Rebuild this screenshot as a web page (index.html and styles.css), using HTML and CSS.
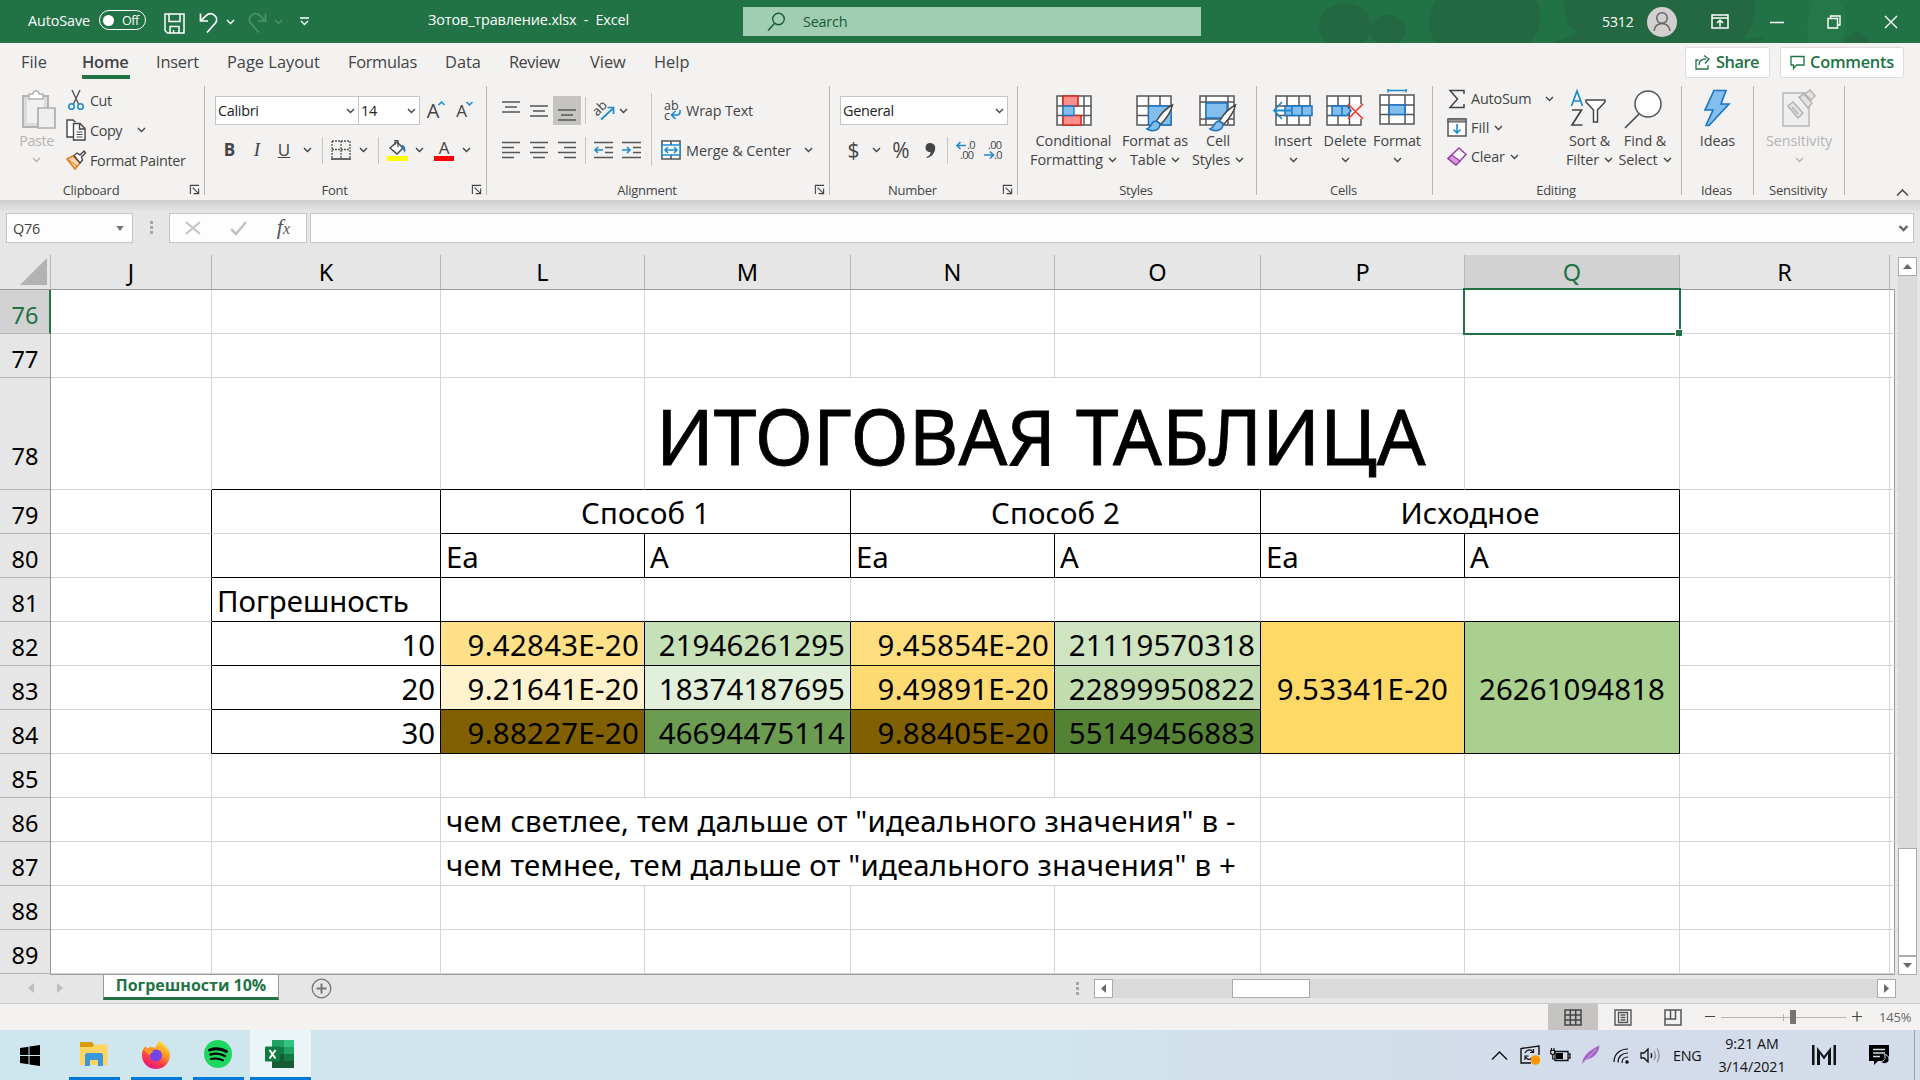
FILE: index.html
```
<!DOCTYPE html>
<html lang="en">
<head>
<meta charset="utf-8">
<title>Зотов_травление.xlsx - Excel</title>
<link rel="stylesheet" href="styles.css">
</head>
<body>
<svg width="0" height="0" class="defs">
  <symbol id="chev" viewBox="0 0 9 6"><path d="M1 1l3.500 3.500L8 1" fill="none" stroke="currentColor" stroke-width="1.400"/></symbol>
  <symbol id="launch" viewBox="0 0 12 12"><path d="M1.500 11V1.500H11M4 4l6 6M10.500 5v5.500H5" fill="none" stroke="#444" stroke-width="1.200"/></symbol>
</svg>
<div class="app">
  <header class="titlebar">
    <svg class="art" width="720" height="43" viewBox="0 0 720 43" fill="#236841"><ellipse cx="145" cy="26" rx="26" ry="23"/><ellipse cx="188" cy="30" rx="18" ry="15"/><path d="M236 0h100q12 20-6 43H236q-14-22 0-43zM364 0h190q6 20-14 43H352l26-10-10-8z"/><path d="M520 43l44-6-6 6zM643 43q14-22 28 0z"/><path d="M612 0q-8 28-2 43h30q12-30-2-43z" fill="#247847"/></svg>
    <span class="autosave">AutoSave</span>
    <span class="toggle"><i></i>Off</span>
    <svg class="save" width="21" height="21" viewBox="0 0 21 21" fill="none" stroke="#fff" stroke-width="1.500"><path d="M1 1h19v19H3.500L1 17.500zM5 1v7.500h11V1M6 20v-6.500h9V20M9.500 20v-3"/></svg>
    <svg class="undo" width="20" height="22" viewBox="0 0 20 22" fill="none" stroke="#fff" stroke-width="1.700"><path d="M1.500 1.500V9H9M1.800 8.800L7 3.700c6-5 13.500 1.500 9.500 7.300L8 20.500"/></svg>
    <svg class="ch w"><use href="#chev"/></svg>
    <svg class="redo" width="20" height="22" viewBox="0 0 20 22" fill="none" stroke="#4d9169" stroke-width="1.700"><path d="M18.500 1.500V9H11M18.200 8.800L13 3.700c-6-5-13.500 1.500-9.500 7.300L12 20.500"/></svg>
    <svg class="ch dim"><use href="#chev"/></svg>
    <svg class="qat" width="9" height="9" viewBox="0 0 9 9" fill="none" stroke="#fff" stroke-width="1.300"><path d="M0 1h9M1 4l3.500 3.500L8 4"/></svg>
    <span class="doc">Зотов_травление.xlsx&nbsp; -&nbsp; Excel</span>
    <div class="search"><svg width="19" height="20" viewBox="0 0 19 20" fill="none" stroke="#185c37" stroke-width="1.400"><circle cx="11.500" cy="7" r="5.800"/><path d="M7.500 11.500L1 18.500"/></svg><span>Search</span></div>
    <span class="user">5312</span>
    <svg class="avatar" width="30" height="30" viewBox="0 0 30 30"><circle cx="15" cy="15" r="15" fill="#d2d0ce"/><g fill="none" stroke="#666" stroke-width="1.500"><circle cx="15" cy="11" r="5.300"/><path d="M7 24c.5-10 15.500-10 16 0"/></g></svg>
    <svg class="winbtn b1" width="18" height="15" viewBox="0 0 18 15" fill="none" stroke="#fff" stroke-width="1.500"><path d="M1 1h16v13H1zM1 4h16M9 12.500V6M6 9l3-3 3 3"/></svg>
    <svg class="winbtn b2" width="14" height="14" viewBox="0 0 14 14" stroke="#fff" stroke-width="1.500"><path d="M0 7.500h14"/></svg>
    <svg class="winbtn b3" width="14" height="14" viewBox="0 0 14 14" fill="none" stroke="#fff" stroke-width="1.400"><path d="M1 3.500h9.500V13H1zM3.500 3.500V1H13v9h-2.500"/></svg>
    <svg class="winbtn b4" width="14" height="14" viewBox="0 0 14 14" stroke="#fff" stroke-width="1.400"><path d="M1 1l12 12M13 1L1 13"/></svg>
  </header>

  <nav class="tabs">
    <span class="t-file">File</span><span class="t-home">Home</span><span class="t-insert">Insert</span><span class="t-page">Page Layout</span><span class="t-form">Formulas</span><span class="t-data">Data</span><span class="t-rev">Review</span><span class="t-view">View</span><span class="t-help">Help</span>
    <div class="pill share"><svg width="16" height="16" viewBox="0 0 16 16" fill="none" stroke="#217346" stroke-width="1.300"><path d="M3.500 6H1v9h12v-4M4 11c0-4 3-6 7-6M9 1.500L14 5l-4 4.500"/></svg>Share</div>
    <div class="pill comments"><svg width="15" height="15" viewBox="0 0 15 15" fill="none" stroke="#217346" stroke-width="1.300"><path d="M1 1.500h13v8.500H6.500L3.500 13.500V10H1z"/></svg>Comments</div>
  </nav>

  <section class="ribbon">
    <div class="group g-clip">
      <div class="body">
        <div class="big paste"><svg width="36" height="40" viewBox="0 0 36 40"><path d="M2 6h25v31H2z" fill="#dcdcdc" stroke="#b5b3b1" stroke-width="2"/><path d="M6 9h17v24H6z" fill="#f1f0ef"/><path d="M8 4h4c0-4 6-4 6 0h4v5H8z" fill="#fff" stroke="#b5b3b1" stroke-width="1.500"/><path d="M17 18h17v20H17z" fill="#eee" stroke="#b0aeac" stroke-width="1.700"/></svg><span>Paste</span><svg class="ch"><use href="#chev"/></svg></div>
        <div class="stack clipstack">
          <div><svg width="20" height="22" viewBox="0 0 20 22" fill="none"><path d="M6 1l7 15M14 1L7 16" stroke="#555" stroke-width="1.400"/><g stroke="#1e8bcd" stroke-width="1.600"><circle cx="5.500" cy="17.500" r="2.700"/><circle cx="14.500" cy="17.500" r="2.700"/></g></svg><span class="s-cut">Cut</span></div>
          <div><svg width="20" height="22" viewBox="0 0 20 22" fill="#fff" stroke="#444" stroke-width="1.400"><path d="M7 18H1V1h6l2.500 2M7.500 4.500h6.500l5 5V21H7.500zM13.500 4.500V10H19"/><path d="M10.500 13h6M10.500 15.500h6M10.500 18h6" stroke-width="1"/></svg><span class="s-copy">Copy</span><svg class="ch"><use href="#chev"/></svg></div>
          <div><svg width="20" height="20" viewBox="0 0 20 20"><path d="M1 9l6-3 7 7-5 6z" fill="#fbd9b8" stroke="#e07b1a" stroke-width="1.500"/><path d="M3 10l8 6" stroke="#e07b1a"/><path d="M8 5.500l3-2.500 3 2 4-4 1.500 2-4 4 1 3-2.500 3z" fill="#fff" stroke="#444" stroke-width="1.400"/></svg><span class="s-fp">Format Painter</span></div>
        </div>
      </div>
      <div class="label">Clipboard<svg class="la"><use href="#launch"/></svg></div>
    </div>

    <div class="group g-font">
      <div class="body rows">
        <div class="row f1">
          <div class="combo">Calibri<svg class="ch"><use href="#chev"/></svg></div>
          <div class="combo">14<svg class="ch"><use href="#chev"/></svg></div>
          <span class="grow">A<svg width="7" height="5" viewBox="0 0 7 5"><path d="M.5 4L3.500 1l3 3" fill="none" stroke="#1e8bcd" stroke-width="1.500"/></svg></span>
          <span class="shrink">A<svg width="7" height="5" viewBox="0 0 7 5"><path d="M.5 1l3 3 3-3" fill="none" stroke="#1e8bcd" stroke-width="1.500"/></svg></span>
        </div>
        <div class="row f2">
          <b>B</b><i>I</i><u>U</u><svg class="ch"><use href="#chev"/></svg><span class="vs"></span>
          <svg width="20" height="20" viewBox="0 0 20 20" fill="none" stroke="#555" stroke-width="1.300"><path d="M1 1h18v17M1 1v17M10 1v17M1 9.500h18" stroke-dasharray="2 1"/><path d="M0 19h20" stroke-width="1.800"/></svg>
          <svg class="ch"><use href="#chev"/></svg><span class="vs"></span>
          <svg width="21" height="22" viewBox="0 0 21 22"><path d="M3 9l7-6 6 6-6 6z" fill="#fff" stroke="#444" stroke-width="1.400"/><path d="M8 6V1.500h3V8" fill="none" stroke="#444" stroke-width="1.200"/><path d="M15 6c3 0 4 4 3 8-1-2-2-4-4-5z" fill="#2e75b6"/><path d="M0 17h21v5H0z" fill="#ff0"/></svg>
          <svg class="ch"><use href="#chev"/></svg>
          <span class="fcolor">A</span>
          <svg class="ch"><use href="#chev"/></svg>
        </div>
      </div>
      <div class="label">Font<svg class="la"><use href="#launch"/></svg></div>
    </div>

    <div class="group g-align">
      <div class="body">
        <div class="rows ar">
        <div class="row a1">
          <svg width="18" height="14" class="up"><path d="M0 2h18M3 7h12M0 12h18" class="ln"/></svg>
          <svg width="18" height="14"><path d="M0 2h18M3 7h12M0 12h18" class="ln"/></svg>
          <span class="on"><svg width="18" height="14"><path d="M0 2h18M3 7h12M0 12h18" class="ln"/></svg></span>
          <span class="vs"></span>
          <svg width="21" height="20" viewBox="0 0 21 20"><text x="0" y="12" transform="rotate(-45 6 10)" class="abt">ab</text><path d="M7 18.500L19.500 7M13.500 6.500h6V13" fill="none" stroke="#1e8bcd" stroke-width="1.700"/></svg>
          <svg class="ch"><use href="#chev"/></svg>
        </div>
        <div class="row a2">
          <svg width="18" height="18"><path d="M0 1.500h18M0 6.500h12M0 11.500h18M0 16.500h12" class="ln"/></svg>
          <svg width="18" height="18"><path d="M0 1.500h18M3 6.500h12M0 11.500h18M3 16.500h12" class="ln"/></svg>
          <svg width="18" height="18"><path d="M0 1.500h18M6 6.500h12M0 11.500h18M6 16.500h12" class="ln"/></svg>
          <span class="vs"></span>
          <svg width="19" height="18"><path d="M0 1.500h19M11 6.500h8M11 11.500h8M0 16.500h19" class="ln"/><path d="M1 9h8M4 6L1 9l3 3" class="bl"/></svg>
          <svg width="19" height="18"><path d="M0 1.500h19M11 6.500h8M11 11.500h8M0 16.500h19" class="ln"/><path d="M0 9h8M5 6l3 3-3 3" class="bl"/></svg>
        </div>
        </div>
        <span class="vs tall"></span>
        <div class="rows wr">
          <div class="row"><svg width="20" height="21" viewBox="0 0 20 21"><text x="3" y="10" class="abc">ab</text><text x="3" y="20" class="abc">c</text><path d="M19 10v2q0 3-3 3h-5M14.500 11l-4 4 4 4" class="bl"/></svg><span class="s-wrap">Wrap Text</span></div>
          <div class="row"><svg width="20" height="20" viewBox="0 0 20 20"><path d="M1 1h18v18H1zM10 1v18" fill="#fff" stroke="#555" stroke-width="1.600"/><path d="M1 5h18v10H1z" fill="#fff" stroke="#1e8bcd" stroke-width="1.500"/><path d="M4 10h12M7 7l-3 3 3 3M13 7l3 3-3 3" class="bl"/></svg><span class="s-merge">Merge &amp; Center</span><svg class="ch"><use href="#chev"/></svg></div>
        </div>
      </div>
      <div class="label">Alignment<svg class="la"><use href="#launch"/></svg></div>
    </div>

    <div class="group g-num">
      <div class="body rows">
        <div class="row n1"><div class="combo">General<svg class="ch"><use href="#chev"/></svg></div></div>
        <div class="row n2">
          <span class="sym">$</span><svg class="ch"><use href="#chev"/></svg><span class="sym">%</span>
          <svg width="11" height="17" viewBox="0 0 11 17"><path d="M5 1c4 0 6 3 5 7-1 4-4 7-8 8l-.5-1c3-1 4-3 4-5C2 10 .5 8 .5 5.500S2.500 1 5 1z" fill="#444"/></svg>
          <span class="vs"></span>
          <svg width="20" height="20" viewBox="0 0 20 20"><text x="11" y="9" class="dec">.0</text><text x="4" y="19" class="dec">.00</text><path d="M1 5.500h9M4.500 2L1 5.500 4.500 9" class="bl"/></svg>
          <svg width="20" height="20" viewBox="0 0 20 20"><text x="4" y="9" class="dec">.00</text><text x="10" y="19" class="dec">.0</text><path d="M0 15h9M6 11.500l3.500 3.500L6 18.500" class="bl"/></svg>
        </div>
      </div>
      <div class="label">Number<svg class="la"><use href="#launch"/></svg></div>
    </div>

    <div class="group g-styles">
      <div class="body">
        <div class="big"><svg width="36" height="36" viewBox="0 0 36 36"><path d="M1 4h34v29H1zM1 14h34M1 23.500h34M7 4v29M28 4v29" fill="#fff" stroke="#555" stroke-width="1.500"/><path d="M7 4h15v10H7zM7 23.500h18V33H7z" fill="#ff8f8f" stroke="#d9291c" stroke-width="1.600"/><path d="M7 14h11v9.500H7z" fill="#83beec" stroke="#1874c5" stroke-width="1.300"/></svg><span>Conditional</span><span>Formatting <svg class="ch"><use href="#chev"/></svg></span></div>
        <div class="big"><svg width="38" height="36" viewBox="0 0 38 36"><path d="M1 4h34v29H1zM1 14h34M1 23.500h34M12.500 4v29M24 4v29" fill="#fff" stroke="#555" stroke-width="1.500"/><path d="M12.500 14H35v19H12.500z" fill="#83beec" stroke="#1874c5" stroke-width="1.300"/><path d="M36.500 13c-8 4-12.500 10-16 16l4.500 3c5-5 9.500-11 11.500-19z" fill="#fff" stroke="#444" stroke-width="1.400"/><path d="M20 29c-5 0-4 6-9 8 5 3 13 2 13-5z" fill="#83beec" stroke="#1874c5" stroke-width="1.500"/></svg><span>Format as</span><span>Table <svg class="ch"><use href="#chev"/></svg></span></div>
        <div class="big"><svg width="38" height="36" viewBox="0 0 38 36"><path d="M1 4h34v29H1zM1 10h34M1 27h34M7 4v29M29 4v29" fill="#fff" stroke="#555" stroke-width="1.500"/><path d="M7 11h21v15H7z" fill="#83beec" stroke="#1874c5" stroke-width="1.300"/><path d="M36.500 13c-8 4-12.500 10-16 16l4.500 3c5-5 9.500-11 11.500-19z" fill="#fff" stroke="#444" stroke-width="1.400"/><path d="M20 29c-5 0-4 6-9 8 5 3 13 2 13-5z" fill="#83beec" stroke="#1874c5" stroke-width="1.500"/></svg><span>Cell</span><span>Styles <svg class="ch"><use href="#chev"/></svg></span></div>
      </div>
      <div class="label">Styles</div>
    </div>

    <div class="group g-cells">
      <div class="body">
        <div class="big"><svg width="40" height="36" viewBox="0 0 40 36"><path d="M3 4h34v29H3zM3 14h34M3 23.500h34M14 4v29M26 4v29" fill="#fff" stroke="#555" stroke-width="1.500"/><path d="M12 14h27v9.500H12zM19 14v9.500M29 14v9.500" fill="#83beec" stroke="#1874c5" stroke-width="1.500"/><path d="M1.500 18.500H18M9 10l-8 8.500L9 27" fill="none" stroke="#1e8bcd" stroke-width="1.800"/></svg><span>Insert</span><svg class="ch"><use href="#chev"/></svg></div>
        <div class="big"><svg width="38" height="36" viewBox="0 0 38 36"><path d="M1 4h34v29H1zM1 14h34M1 23.500h34M12 4v29M23.500 4v29" fill="#fff" stroke="#555" stroke-width="1.500"/><path d="M24 12h14v15H24z" fill="#f3f2f1"/><path d="M6 14h15l4 4.800-4 4.700H6zM16 14v9.500" fill="#83beec" stroke="#1874c5" stroke-width="1.500"/><path d="M22 12l15 15M37 12L22 27" stroke="#e8413a" stroke-width="1.700"/></svg><span>Delete</span><svg class="ch"><use href="#chev"/></svg></div>
        <div class="big fmt"><svg width="36" height="38" viewBox="0 0 36 38"><path d="M1 6h34v29H1zM1 16h34M1 25.500h34M10 6v29M26 6v29" fill="#fff" stroke="#555" stroke-width="1.500"/><path d="M10 16h16v9.500H10z" fill="#83beec" stroke="#1874c5" stroke-width="1.600"/><path d="M9 1.500h18M9 0v3.500M27 0v3.500" stroke="#1e8bcd" stroke-width="1.500"/></svg><span>Format</span><svg class="ch"><use href="#chev"/></svg></div>
      </div>
      <div class="label">Cells</div>
    </div>

    <div class="group g-edit">
      <div class="body">
        <div class="stack editstack">
          <div><svg width="20" height="20" viewBox="0 0 20 20" fill="none" stroke="#444" stroke-width="1.500"><path d="M17 5V1.500H3L10.500 10 3 18.500h14V15"/></svg><span class="s-as">AutoSum</span><svg class="ch far"><use href="#chev"/></svg></div>
          <div><svg width="20" height="19" viewBox="0 0 20 19"><path d="M1 1h18v17H1z" fill="#fff" stroke="#555" stroke-width="1.500"/><path d="M1 1h18v3H1z" fill="#999" stroke="#555"/><path d="M10 6v9M6.500 11.500L10 15l3.500-3.500" class="bl"/></svg><span class="s-fill">Fill</span><svg class="ch"><use href="#chev"/></svg></div>
          <div><svg width="20" height="19" viewBox="0 0 20 19"><path d="M1 11.500L12 1l7 6.500L9 18z" fill="#fff" stroke="#9b3ba5" stroke-width="1.500"/><path d="M1 11.500L5 8l8 6-4 4z" fill="#d59ad9" stroke="#9b3ba5" stroke-width="1.300"/></svg><span class="s-clear">Clear</span><svg class="ch"><use href="#chev"/></svg></div>
        </div>
        <div class="big sort"><svg width="38" height="38" viewBox="0 0 38 38"><g fill="none" stroke-width="1.700"><path d="M1.500 17L7 2l5.500 15M3.500 12h7" stroke="#1e8bcd"/><path d="M2 21h9.500L2 36h10.500" stroke="#444"/><path d="M16 11h19v2l-7.500 8v12h-4V21L16 13z" stroke="#444" fill="#fff" stroke-width="1.500"/></g></svg><span>Sort &amp;</span><span>Filter <svg class="ch"><use href="#chev"/></svg></span></div>
        <div class="big find"><svg width="38" height="40" viewBox="0 0 38 40"><circle cx="24" cy="15" r="13" fill="#fff" stroke="#555" stroke-width="1.500"/><path d="M15 25L1 39" stroke="#444" stroke-width="1.600"/></svg><span>Find &amp;</span><span>Select <svg class="ch"><use href="#chev"/></svg></span></div>
      </div>
      <div class="label">Editing</div>
    </div>

    <div class="group g-ideas">
      <div class="body"><div class="big bolt"><svg width="28" height="38" viewBox="0 0 28 38"><path d="M11 1.500h12L18 15h8L6 36.500h-3L10 21H2z" fill="#83beec" stroke="#1874c5" stroke-width="1.600"/></svg><span>Ideas</span></div></div>
      <div class="label">Ideas</div>
    </div>
    <div class="group g-sens">
      <div class="body"><div class="big paste sens"><svg width="36" height="38" viewBox="0 0 36 38"><path d="M2 4h26v33H2z" fill="#eee" stroke="#c4c2c0" stroke-width="1.800"/><g fill="#e4e3e2" stroke="#b5b3b1" stroke-width="1.500"><path d="M7 17l5-4 10 11-5 5z"/><path d="M11 18l6 7"/><path d="M18 8l5-3 8 9-4 5z"/><path d="M24 5l5-4 5 6-4 4z"/></g></svg><span>Sensitivity</span><svg class="ch"><use href="#chev"/></svg></div></div>
      <div class="label">Sensitivity</div>
    </div>
    <div class="collapse"><svg width="13" height="9" viewBox="0 0 13 9"><path d="M1 7.500L6.500 2 12 7.500" fill="none" stroke="#444" stroke-width="1.500"/></svg></div>
  </section>

  <section class="formula">
    <div class="box name">Q76<svg width="8" height="5"><path d="M0 0h8L4 5z" fill="#777"/></svg></div>
    <svg class="dots" width="4" height="14"><path d="M0 0h3v3H0zM0 5h3v3H0zM0 10h3v3H0z" fill="#a6a6a6"/></svg>
    <div class="box fx"><svg width="16" height="14" viewBox="0 0 16 14"><path d="M1 1l14 12M15 1L1 13" stroke="#c4c4c4" stroke-width="2"/></svg><svg width="17" height="15" viewBox="0 0 17 15"><path d="M1 8l5 5L16 1" fill="none" stroke="#c4c4c4" stroke-width="2.600"/></svg><em>f<small>x</small></em></div>
    <div class="box input"><svg width="9" height="7"><path d="M.5 1l4 4 4-4" fill="none" stroke="#666" stroke-width="2.400"/></svg></div>
  </section>

  <section class="sheet">
    <div class="cols">
      <span class="corner"><svg width="27" height="27"><path d="M27 0v27H0z" fill="#b2b2b2"/></svg></span>
      <span>J</span><span>K</span><span>L</span><span>M</span><span>N</span><span>O</span><span>P</span><span class="sel">Q</span><span>R</span><span class="end"></span>
    </div>
    <div class="mid">
      <div class="rowheads"><span class="sel">76</span><span>77</span><span class="h78">78</span><span>79</span><span>80</span><span>81</span><span>82</span><span>83</span><span>84</span><span>85</span><span>86</span><span>87</span><span>88</span><span>89</span></div>
      <div class="grid">
        <p></p><p></p><p></p><p></p><p></p><p></p><p></p><p class="active"><span class="cursor"></span></p><p></p><p class="z"></p>
        <p></p><p></p><p></p><p></p><p></p><p></p><p></p><p></p><p></p><p class="z"></p>
        <p></p><p class="kb"></p><p class="kb"></p><p class="kb title">ИТОГОВАЯ ТАБЛИЦА</p><p class="kb"></p><p></p><p class="z"></p>
        <p class="kr"></p><p class="kr"></p><p class="kr kb span2">Способ 1</p><p class="kr kb span2">Способ 2</p><p class="kr kb span2">Исходное</p><p></p><p class="z"></p>
        <p class="kr"></p><p class="kr kb"></p><p class="kr kb">Ea</p><p class="kr kb">A</p><p class="kr kb">Ea</p><p class="kr kb">A</p><p class="kr kb">Ea</p><p class="kr kb">A</p><p></p><p class="z"></p>
        <p class="kr"></p><p class="kr kb">Погрешность</p><p class="kb"></p><p class="kb"></p><p class="kb"></p><p class="kb"></p><p class="kb"></p><p class="kr kb"></p><p></p><p class="z"></p>
        <p class="kr"></p><p class="kr kb n">10</p><p class="kr kb n y1">9.42843E-20</p><p class="kr kb n v1">21946261295</p><p class="kr kb n y3">9.45854E-20</p><p class="kr kb n v4">21119570318</p><p class="kr kb span3 y5">9.53341E-20</p><p class="kr kb span3 v7">26261094818</p><p></p><p class="z"></p>
        <p class="kr"></p><p class="kr kb n">20</p><p class="kr kb n y2">9.21641E-20</p><p class="kr kb n v2">18374187695</p><p class="kr kb n y4">9.49891E-20</p><p class="kr kb n v5">22899950822</p><p></p><p class="z"></p>
        <p class="kr"></p><p class="kr kb n">30</p><p class="kr kb n dk">9.88227E-20</p><p class="kr kb n v3">46694475114</p><p class="kr kb n dk">9.88405E-20</p><p class="kr kb n v6">55149456883</p><p></p><p class="z"></p>
        <p></p><p></p><p></p><p></p><p></p><p></p><p></p><p></p><p></p><p class="z"></p>
        <p></p><p></p><p class="note">чем светлее, тем дальше от "идеального значения" в -</p><p></p><p></p><p></p><p class="z"></p>
        <p></p><p></p><p class="note">чем темнее, тем дальше от "идеального значения" в +</p><p></p><p></p><p></p><p class="z"></p>
        <p></p><p></p><p></p><p></p><p></p><p></p><p></p><p></p><p></p><p class="z"></p>
        <p></p><p></p><p></p><p></p><p></p><p></p><p></p><p></p><p></p><p class="z"></p>
      </div>
    </div>
    <div class="vscroll"><span class="sb"><svg width="9" height="5"><path d="M0 5h9L4.500 0z" fill="#6a6a6a"/></svg></span><span class="vthumb"></span><span class="sb"><svg width="9" height="5"><path d="M0 0h9L4.500 5z" fill="#6a6a6a"/></svg></span></div>
  </section>

  <section class="sheettabs">
    <svg class="nav1" width="6" height="10"><path d="M6 0v10L0 5z" fill="#bdbdbd"/></svg><svg class="nav2" width="6" height="10"><path d="M0 0v10l6-5z" fill="#bdbdbd"/></svg>
    <div class="tab">Погрешности 10%</div>
    <svg class="plus" width="21" height="21" viewBox="0 0 21 21" fill="none" stroke="#777"><circle cx="10.500" cy="10.500" r="9.300" stroke-width="1.300"/><path d="M5.500 10.500h10M10.500 5.500v10" stroke-width="2"/></svg>
    <svg class="hd" width="4" height="14"><path d="M0 0h3v3H0zM0 5h3v3H0zM0 10h3v3H0z" fill="#a6a6a6"/></svg>
    <div class="hscroll"><span class="sb"><svg width="5" height="9"><path d="M5 0v9L0 4.500z" fill="#6a6a6a"/></svg></span><span class="hthumb"></span><span class="sb"><svg width="5" height="9"><path d="M0 0v9l5-4.500z" fill="#6a6a6a"/></svg></span></div>
  </section>

  <section class="status">
    <span class="view on"><svg width="18" height="17" viewBox="0 0 18 17" fill="none" stroke="#444" stroke-width="1.500"><path d="M1 1h16v15H1zM1 6h16M1 11h16M6.300 1v15M11.700 1v15"/></svg></span>
    <span class="view"><svg width="18" height="17" viewBox="0 0 18 17" fill="none" stroke="#555" stroke-width="1.400"><path d="M1 1h16v15H1zM4.500 3.500h9v10h-9zM6.500 6h5M6.500 8.500h5M6.500 11h5"/></svg></span>
    <span class="view"><svg width="18" height="17" viewBox="0 0 18 17" fill="none" stroke="#555" stroke-width="1.500"><path d="M1 1h16v15H1zM1 10h10.500V1M6.500 1v9"/></svg></span>
    <svg class="zoom" width="160" height="16" viewBox="0 0 160 16"><path d="M0 7.500h10M147 7.500h10M152 2.500v10" stroke="#444" stroke-width="1.200"/><path d="M16 8.500h125M78.500 5v7" stroke="#b5b3b1"/><path d="M85 1h6v14h-6z" fill="#777573"/></svg>
    <span class="pct">145%</span>
  </section>

  <footer class="taskbar">
    <span class="tk start"><svg width="20" height="21" viewBox="0 0 20 21"><path d="M0 3l8.500-1.200V10H0zM9.500 1.600L20 0v10H9.500zM0 11h8.500v8.200L0 18zM9.500 11H20v10L9.500 19.400z"/></svg></span>
    <span class="tk run fold"><svg width="28" height="24" viewBox="0 0 28 24"><path d="M0 1q0-1 1-1h11l2 3-2 3H0z" fill="#d99a07"/><path d="M0 5h12l3-2.500h12.500V23H0z" fill="#ffd463"/><path d="M5 24V13q0-2 2-2h14q2 0 2 2v11h-5v-6h-8v6z" fill="#3b97dd"/></svg></span>
    <span class="tk run fire"><svg width="28" height="29" viewBox="0 0 28 29"><defs><linearGradient id="ff" x1=".8" y1="0" x2=".3" y2="1"><stop offset="0" stop-color="#fff04a"/><stop offset=".4" stop-color="#ff9a1f"/><stop offset=".7" stop-color="#ff3b47"/><stop offset="1" stop-color="#e31587"/></linearGradient></defs><path d="M18 0c1 4 9 6 10 14 0 9-6 15-14 15S0 23 0 15c0-5 2-7 4-9l1 3c3-3 6-2 8-1 1-3 3-5 5-8z" fill="url(#ff)"/><circle cx="14" cy="15.500" r="6" fill="#7542e5"/><path d="M2 9c4 0 7 1 10 3-3 0-4 2-4 3-3-1-5-3-6-6z" fill="#ff9a1f"/></svg></span>
    <span class="tk run spot"><svg width="28" height="28" viewBox="0 0 28 28"><circle cx="14" cy="14" r="14" fill="#1ed760"/><g fill="none" stroke="#000" stroke-linecap="round"><path d="M5.500 10c6-2 12-1.500 17 1.500" stroke-width="2.800"/><path d="M6.500 14.500c5-1.500 10-1 14.500 1.500" stroke-width="2.400"/><path d="M7 19c4-1 8-.8 12 1.300" stroke-width="2"/></g></svg></span>
    <span class="tk run xl"><svg width="30" height="28" viewBox="0 0 30 28"><path d="M7 0h12v7H7z" fill="#21a366"/><path d="M19 0h10v7H19z" fill="#33c481"/><path d="M7 7h12v7H7z" fill="#107c41"/><path d="M19 7h10v7H19z" fill="#21a366"/><path d="M7 14h12v7H7z" fill="#185c37"/><path d="M19 14h10v7H19z" fill="#107c41"/><path d="M7 21h22v7H7z" fill="#185c37"/><rect x="0" y="6.500" width="15" height="15" rx="1" fill="#107c41"/><path d="M4.500 10l6 8.500M10.500 10l-6 8.500" stroke="#fff" stroke-width="2"/></svg></span>
    <svg class="t-up" width="17" height="11" viewBox="0 0 17 11"><path d="M1 9.500L8.500 2 16 9.500" fill="none" stroke="#111" stroke-width="1.400"/></svg>
    <svg class="t-sync" width="21" height="20" viewBox="0 0 21 20"><path d="M11 18H1V3.500L19 1v9" fill="none" stroke="#111" stroke-width="1.400"/><path d="M5 8c2-4 6-4 8-1M13.500 4v3.500H10M5 15v-4h3.500M6 12c1 3 4 3 6 1" fill="none" stroke="#111" stroke-width="1.200"/><circle cx="15.500" cy="15" r="4.800" fill="#ff9500"/></svg>
    <svg class="t-bat" width="21" height="15" viewBox="0 0 21 15"><path d="M5 3.500h13v9H5zM18.500 6h1.500v4h-1.500" fill="none" stroke="#111" stroke-width="1.300"/><path d="M6 5h7v6H6z"/><path d="M.7 2.500h4v3q-2 2-4 0zM1.500 0v2.500M4 0v2.500M2.700 7v4H5" fill="none" stroke="#111" stroke-width="1.200"/></svg>
    <svg class="t-fea" width="19" height="20" viewBox="0 0 19 20"><path d="M1 19C2 11 8 5 18.500.5 18 8 12 14 4 15z" fill="#a464c4"/><path d="M1 19.500L15 4" stroke="#d8b4e6"/></svg>
    <svg class="t-wifi" width="17" height="17" viewBox="0 0 17 17" fill="none" stroke="#111" stroke-width="1.200"><path d="M1 15C1 7 7 2 15 2M5 15.500c0-6 4-9.500 10-9.500M9 16c0-4 2-6 6-6"/><circle cx="14" cy="15" r="1.200" fill="#111"/></svg>
    <svg class="t-vol" width="21" height="17" viewBox="0 0 21 17" fill="none" stroke="#111" stroke-width="1.300"><path d="M1 6h3l4-4v13l-4-4H1zM11 6q1.500 2.500 0 5"/><path d="M14 4q3 4.500 0 9M17 1.500q4.500 7 0 14" stroke="#8c939c"/></svg>
    <span class="eng">ENG</span>
    <div class="clock"><span>9:21 AM</span><span>3/14/2021</span></div>
    <svg class="t-m" width="24" height="20" viewBox="0 0 24 20"><path d="M0 0h2.500v20H0zM21.500 0H24v20h-2.500zM5 20V2l7 9 7-9v18h-3V9l-4 5.500L8 9v11z" fill="#111"/></svg>
    <svg class="t-note" width="21" height="20" viewBox="0 0 21 20"><path d="M0 0h20v16H9l-4 4v-4H0z"/><path d="M4 4.500h12M4 8h12M4 11.500h7" stroke="#d4dcea" stroke-width="1.400"/><path d="M15.500 9.500c1.500 4 0 7-4 7 3 4 9 2 8.500-3-.5-2.500-2.500-4-4.500-4z" stroke="#d4dcea"/></svg>
    <span class="edge"></span>
  </footer>
</div>
</body>
</html>
```
FILE: styles.css
```
*{box-sizing:border-box}
body{margin:0;width:1920px;height:1080px;overflow:hidden;background:#e6e6e6;font-family:"Open Sans","Noto Sans",sans-serif;font-size:14.4px;color:#444}
svg{flex:none;display:block;overflow:visible}
.defs{position:absolute}
.app{display:flex;flex-direction:column;width:1920px;height:1080px}
.ch{width:9px;height:6px;color:#444}
.ln{stroke:#555;stroke-width:1.5;fill:none}
.bl{stroke:#1e8bcd;stroke-width:1.6;fill:none}

/* title bar */
.titlebar{position:relative;height:43px;flex:none;background:#217346;color:#fff;display:flex;align-items:center;white-space:nowrap}
.titlebar>*{flex:none}
.art{position:absolute;left:1200px;top:0;overflow:hidden}
.titlebar>:not(.art){position:relative}
.autosave{margin-left:28px;width:71px;letter-spacing:-.1px;margin-top:-2px}
.toggle{width:47px;height:20px;border:1.5px solid #fff;border-radius:10px;display:flex;align-items:center;gap:8px;padding-left:3px;font-size:12.5px;letter-spacing:-.5px;margin-top:-3px}
.toggle i{width:11px;height:11px;border-radius:50%;background:#fff}
.save{margin-left:18px;margin-top:3px}
.undo{margin:3px 7px 0 14px}
.ch.w{color:#fff}
.ch.dim{color:#4d9169}
.redo{margin:3px 7px 0 12px}
.qat{margin-left:17px}
.doc{margin-left:119px;width:315px;letter-spacing:-.12px;margin-top:-4px}
.search{width:458px;height:29px;background:#a0cdb4;color:#185c37;display:flex;align-items:center;padding-left:24px;letter-spacing:-.2px}
.search span{margin-left:17px}
.user{margin-left:401px;width:45px;font-size:14px;letter-spacing:-.1px}
.b1{margin-left:34px}
.b2{margin-left:41px}
.b3{margin-left:43px}
.b4{margin-left:43px}

/* ribbon tabs */
.tabs{height:43px;flex:none;background:#f3f2f1;display:flex;font-size:16.4px;padding-left:21px;line-height:38px}
.tabs>span{flex:none;height:36px}
.t-file{width:61px}
.t-home{width:74px;font-weight:600;letter-spacing:-.2px;background:linear-gradient(#217346,#217346) 0 32px/48px 4px no-repeat}
.t-insert{width:71px;letter-spacing:-.2px}
.t-page{width:121px}
.t-form{width:97px;letter-spacing:-.3px}
.t-data{width:64px}
.t-rev{width:81px;letter-spacing:-.5px}
.t-view{width:64px}
.t-help{width:1031px}
.pill{height:31px;margin-top:3.500px;background:#fff;border:1px solid #dedcda;border-radius:3px;color:#217346;font-weight:600;display:flex;align-items:center;gap:5px;padding-left:9px;line-height:28px}
.share{width:85px;margin-right:10px;letter-spacing:-.5px}
.comments{width:124px;letter-spacing:-.25px}

/* ribbon */
.ribbon{height:114px;flex:none;background:#f3f2f1;display:flex}
.group{position:relative;height:109px;border-right:1px solid #b8b6b4;display:flex;flex-direction:column;flex:none}
.g-clip{width:205px}.g-font{width:282px}.g-align{width:343px}.g-num{width:188px}.g-styles{width:239px}.g-cells{width:176px}.g-edit{width:249px}.g-ideas{width:72px}.g-sens{width:91px}
.body{height:94px;display:flex;flex:none}
.label{height:19px;line-height:21px;font-size:13px;letter-spacing:-.25px;text-align:center;padding-right:22px;white-space:nowrap}
.la{position:absolute;right:4px;bottom:0;width:11px;height:11px}
.g-styles .label,.g-cells .label,.g-edit .label,.g-ideas .label,.g-sens .label{padding-right:2px}
.big{display:flex;flex-direction:column;align-items:center;white-space:nowrap;line-height:20px;letter-spacing:-.1px}
.big>svg:first-child{height:40px;margin:4px 0 0;padding:0}
.big>span{display:flex;align-items:center;gap:5px;height:20px;margin-top:0}
.big>svg:first-child+span{margin-top:1px;height:19px}
.big>.ch{margin-top:7px}
.big.sort>svg:first-child{margin:2px 0 2px -2px}
.big.find>svg:first-child{margin:3px 0 1px -5px}
.big.bolt>svg:first-child,.big.sens>svg:first-child{margin:2px 0 2px}
.big.fmt>svg:first-child{margin:2px 0 2px}
.paste{color:#b5b3b1}
.paste .ch{color:#b5b3b1}
.g-clip .paste{width:73px;letter-spacing:-.4px}
.g-clip .paste>svg:first-child{margin-left:5px}
.stack{display:flex;flex-direction:column}
.stack>div{display:flex;align-items:center;height:30px;white-space:nowrap}
.stack span{margin-left:4px}
.clipstack{margin:-1px 0 0 -7px}
.clipstack .ch{margin-left:15px}
.s-cut{letter-spacing:-.5px}.s-copy{letter-spacing:-.4px}.s-fp{letter-spacing:-.35px}
.rows{display:flex;flex-direction:column;gap:15px;padding-top:10px}
.row{height:29px;display:grid;grid-template-rows:100%;align-items:center;justify-items:center}
.rows .row+.row{height:20px}
.combo{width:100%;height:29px;border:1px solid #c6c4c2;background:#fff;color:#222;display:flex;align-items:center;justify-content:space-between;padding:0 3px 0 2px;letter-spacing:-.3px}
.f1{grid-template-columns:144px 61px 32px 25px;margin-left:10px}
.f1 .combo+.combo{border-left:0}
.grow,.shrink{display:flex;font-size:20px;line-height:24px;letter-spacing:-1px}
.shrink{font-size:17px}
.grow svg,.shrink svg{margin-top:2px}
.f2{grid-template-columns:29px 26px 28px 18px 13px 23px 22px 9px 28px 16px 34px 11px;margin-left:10px;font-size:17px;line-height:20px}
.f2 i{font-family:"Liberation Serif",serif;font-size:19px}
.vs{width:1px;height:27px;background:#c8c6c4}
.fcolor{border-bottom:5px solid red;width:20px;line-height:17px;height:22px;text-align:center;font-size:17px}
.ar{margin-left:10px}
.a1{grid-template-columns:28px 28px 28px 9px 28px 10px}
.a1 .up{margin-top:-7px}
.on{width:28px;height:29px;background:#c6c4c2;display:flex;align-items:center;justify-content:center;padding-top:8px}
.a2{grid-template-columns:28px 28px 28px 9px 27px 28px}
.abt{font-size:13px;fill:#444}
.abc{font-size:12.500px;fill:#444}
.dec{font-size:11px;fill:#444;letter-spacing:-.7px}
.tall{height:73px;margin:7px 0 0 6px}
.wr{margin-left:9px}
.wr .row{display:flex}
.wr span{margin-left:5px;white-space:nowrap}
.s-wrap{letter-spacing:-.15px}
.s-merge{letter-spacing:-.05px;width:118px}
.n1{width:168px;margin-left:10px}
.n2{grid-template-columns:27px 18px 32px 26px 8px 29px 27px;margin-left:10px}
.sym{font-size:21px;line-height:20px}
.g-styles .body{display:grid;grid-template-columns:87px 76px 50px;padding-left:12px}
.g-cells .body{display:grid;grid-template-columns:52px 52px 52px;padding-left:10px}
.g-edit .body{display:grid;grid-template-columns:116px 55px 56px;padding-left:13px}
.editstack{margin:-2px 0 0 1px}
.editstack>div{height:29px}
.editstack .ch{margin-left:5px}
.editstack .far{margin-left:14px}
.s-as{letter-spacing:-.2px}.s-clear{letter-spacing:-.2px}
.g-ideas .body,.g-sens .body{justify-content:center}
.collapse{margin:102px 0 0 51px}

/* formula bar */
.formula{height:55px;flex:none;display:flex;padding:13px 0 0 6px;background:linear-gradient(#cfcecd,#e6e6e6 12px)}
.box{height:30px;border:1px solid #c6c6c6;background:#fdfdfd;display:flex;align-items:center}
.name{width:127px;justify-content:space-between;padding:0 8px 0 6px;letter-spacing:-.2px}
.dots{margin:8px 15px 0 17px}
.fx{width:138px;justify-content:space-between;padding:0 16px 0 15px;margin-right:3px}
.fx em{font-family:"Liberation Serif",serif;font-size:22px;line-height:22px;color:#555}
.fx small{font-size:16px}
.input{width:1604px;justify-content:flex-end;padding-right:5px}

/* worksheet */
.sheet{height:720px;flex:none;display:grid;grid-template-columns:1898px 19px;grid-template-rows:35px 685px;font-family:"Noto Sans",sans-serif}
.cols{display:grid;grid-template-columns:51px 161px 229px 204px 206px 204px 206px 204px 215px 210px 5px;color:#000;font-size:23.500px}
.cols span{border-right:1px solid #b5b5b5;border-bottom:1px solid #999;display:flex;justify-content:center;align-items:center;line-height:34px;min-height:0;height:35px}
.cols .corner{justify-content:flex-end;padding:2px 3px 3px 0}
.cols .sel{background:#d2d2d2;color:#217346}
.cols .end{border-right:0}
.mid{display:grid;grid-template-columns:51px 1847px}
.rowheads{display:flex;flex-direction:column;border-right:1px solid #999;font-size:23.500px;color:#000}
.rowheads span{height:44px;border-bottom:1px solid #b5b5b5;text-align:center;line-height:50px;flex:none}
.rowheads .h78{height:112px;padding-top:53px}
.rowheads .sel{background:#d2d2d2;color:#217346;border-right:2px solid #217346;width:51px;padding-left:1px}
.grid{width:1844px;height:685px;background:#fff;display:grid;grid-template-columns:161px 229px 204px 206px 204px 206px 204px 215px 210px 4px;grid-template-rows:44px 44px 112px repeat(11,44px);border-right:1px solid #999;border-bottom:1px solid #999;color:#000;font-size:29.400px}
.grid p{margin:0;border-right:1px solid #d4d4d4;border-bottom:1px solid #d4d4d4;padding:0 5px;line-height:47px;white-space:nowrap;min-width:0;min-height:0}
.grid .z{border-right:0}
.grid .kr{border-right-color:#000}
.grid .kb{border-bottom-color:#000}
.grid .n{text-align:right}
.grid .title{grid-column:span 4;font-size:76.500px;line-height:114px;padding:0 0 0 11px;-webkit-text-stroke:.8px #000}
.grid .span2{grid-column:span 2;text-align:center;letter-spacing:.15px}
.grid .span3{grid-row:span 3;text-align:center;line-height:134px;letter-spacing:.1px}
.grid .y1,.grid .y2,.grid .y3,.grid .y4,.grid .y5,.grid .dk{letter-spacing:.3px}
.grid .v1,.grid .v2,.grid .v3,.grid .v4,.grid .v5,.grid .v6{letter-spacing:.12px}
.grid .note{grid-column:span 4;letter-spacing:.18px}
.grid .active{position:relative}
.cursor{position:absolute;left:-2px;top:-2px;width:218px;height:47px;border:2px solid #217346}
.cursor::after{content:"";position:absolute;right:-3px;bottom:-3px;width:6px;height:6px;background:#217346;border:1px solid #fff;border-width:1px 0 0 1px}
.y1{background:#ffe189}.y2{background:#fff2cf}.y3{background:#ffde80}.y4{background:#fddb72}.y5{background:#ffd966}.dk{background:#806000}
.v1{background:#c6e0b8}.v2{background:#e2efda}.v3{background:#6c9c52}.v4{background:#cfe5c2}.v5{background:#c1ddb0}.v6{background:#548235}.v7{background:#a9d08e}
.vscroll{grid-column:2;grid-row:1/3;margin-top:2px;background:#dadada;display:flex;flex-direction:column;height:718px}
.sb{width:19px;height:19px;background:#fff;border:1px solid #ababab;display:flex;align-items:center;justify-content:center;flex:none}
.vthumb{margin-top:572px;height:108px;background:#fff;border:1px solid #ababab}

/* sheet tabs */
.sheettabs{height:29px;flex:none;display:flex;border-bottom:1px solid #c6c6c6;background:#e6e6e6}
.nav1{margin:8px 23px 0 28px}
.nav2{margin:8px 40px 0 0}
.nav2+.tab{width:176px;height:25px;background:#fff;border:1px solid #999;border-top:0;border-bottom:3px solid #217346;color:#217346;font-weight:700;font-size:16px;line-height:21px;text-align:center;white-space:nowrap;letter-spacing:0}
.plus{margin:3px 0 0 32px}
.hd{margin:7px 14px 0 744px}
.hscroll{margin-top:4px;width:802px;height:19px;background:#dadada;display:flex}
.hthumb{margin:0 567px 0 119px;width:78px;background:#fff;border:1px solid #ababab}

/* status bar */
.status{height:26px;flex:none;background:#f3f2f1;display:flex;align-items:center;padding-left:1548px}
.view{width:50px;height:26px;display:flex;align-items:center;justify-content:center;padding:0}
.view.on{width:50px;height:26px;padding:0 1px 0 0;background:#c6c4c2}
.zoom{margin-left:7px}
.pct{margin-left:14px;font-size:13px;letter-spacing:-.2px;color:#666}

/* taskbar */
.taskbar{height:50px;flex:none;background:linear-gradient(90deg,#cee6ee 0,#d0e5ee 1050px,#d2dfeb 1250px,#d4dbea 1700px,#d5dce9);display:flex;align-items:center;color:#111}
.taskbar>*{flex:none}
.tk{height:50px;display:flex;align-items:center;justify-content:center}
.start{width:61px;margin-right:8px;padding-right:1px}
.run{border-bottom:3px solid #0078d7;padding:1px 2px 0 0}
.fold{width:51px}.fire{width:51px;margin-left:11px}.spot{width:51px;margin-left:11px}
.xl{width:61px;margin-left:6px;background:#ebf4f8}
.t-up{margin-left:1180px}
.t-sync{margin-left:12px}
.t-bat{margin-left:9px}
.t-fea{margin-left:10px}
.t-wifi{margin-left:13px}
.t-vol{margin-left:10px}
.eng{margin-left:12px;width:42px;letter-spacing:-.3px}
.clock{width:74px;display:flex;flex-direction:column;text-align:center;line-height:23px;font-size:14.200px}
.t-m{margin-left:23px}
.t-note{margin-left:33px}
.edge{width:1px;height:50px;margin-left:24px;background:#9ba4b0}
```
